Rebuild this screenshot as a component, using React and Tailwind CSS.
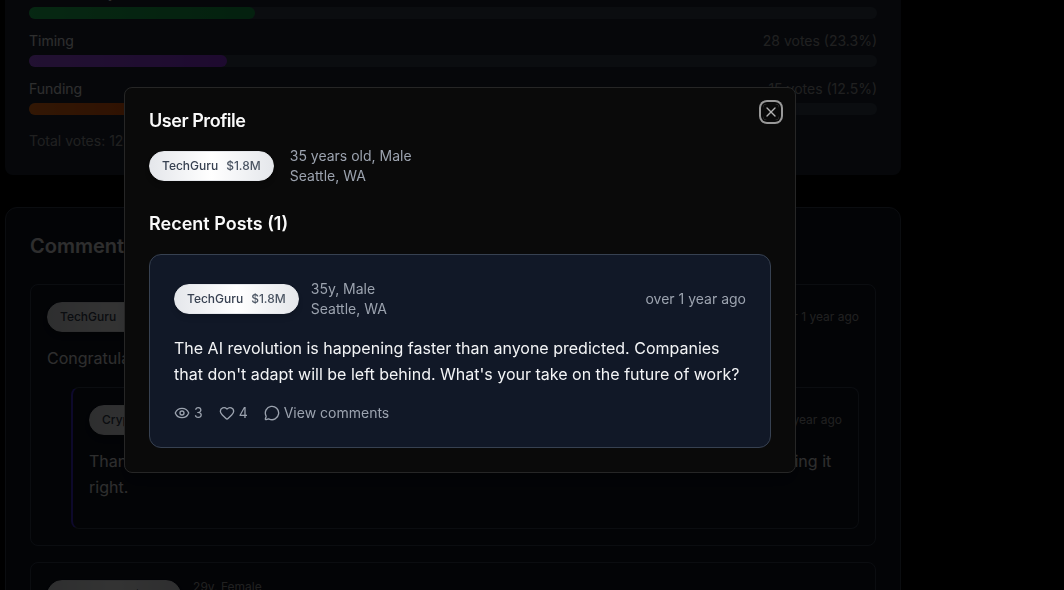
import { Eye, Heart, MessageCircle, X } from "lucide-react";

const results = [
  { label: "Team Quality", votes: 32, share: 26.7, fill: "from-[#22c55e] to-[#16a34a]" },
  { label: "Timing", votes: 28, share: 23.3, fill: "from-[#a855f7] to-[#9333ea]" },
  { label: "Funding", votes: 15, share: 12.5, fill: "from-[#f97316] to-[#ea580c]" },
];

function UserPill({ name, worth }) {
  return (
    <span className="inline-flex shrink-0 items-center gap-2 rounded-full border border-gray-200 bg-linear-to-r from-gray-200 via-white to-gray-200 px-3 py-1.5 text-xs font-medium text-[#374151] shadow-md">
      <span>{name}</span>
      <span className="text-[#4b5563]">{worth}</span>
    </span>
  );
}

function CommentHeader({ name, worth, person, place }) {
  return (
    <div className="flex items-center justify-between text-xs text-neutral-400">
      <div className="flex items-center gap-3">
        <UserPill name={name} worth={worth} />
        <div>
          <div>{person}</div>
          <div>{place}</div>
        </div>
      </div>
      <span>over 1 year ago</span>
    </div>
  );
}

function PollResults() {
  return (
    <section className="rounded-lg bg-[#1e2636] p-6 text-sm">
      <div className="flex flex-col gap-3">
        {results.map((r) => (
          <div key={r.label} className="flex flex-col gap-1">
            <div className="flex justify-between">
              <span className="text-neutral-200">{r.label}</span>
              <span className="text-neutral-400">
                {r.votes} votes ({r.share}%)
              </span>
            </div>
            <div className="h-3 rounded-full bg-[#374151]">
              <div className={`h-3 rounded-full bg-linear-to-r ${r.fill}`} style={{ width: `${r.share}%` }} />
            </div>
          </div>
        ))}
      </div>
      <p className="mt-4 text-neutral-400">Total votes: 120</p>
    </section>
  );
}

function Comments() {
  return (
    <section className="rounded-xl border border-[#374151] bg-[#0f141f] p-6">
      <h2 className="mb-6 text-xl font-semibold text-neutral-200">Comments (2)</h2>
      <div className="flex flex-col gap-4">
        <article className="rounded-lg border border-[#374151] p-4">
          <CommentHeader name="TechGuru" worth="$1.8M" person="35y, Male" place="Seattle, WA" />
          <p className="mt-3 leading-[26px] text-neutral-200">Congratulations on the exit!</p>
          <article className="mt-4 ml-6 rounded-lg border border-l-2 border-[#374151] border-l-indigo-700 p-4 pb-7">
            <CommentHeader name="CryptoKing" worth="$2.5M" person="28y, Male" place="Miami, FL" />
            <p className="mt-3 leading-[26px] text-neutral-200">
              Thank you! It took years of hard work, a great team and a lot of patience, but we ended up doing it right.
            </p>
          </article>
        </article>
        <article className="rounded-lg border border-[#374151] p-4">
          <CommentHeader name="StartupCeo" worth="$1.2M" person="29y, Female" place="Austin, TX" />
          <p className="mt-3 leading-[26px] text-neutral-200">Inspiring story.</p>
        </article>
      </div>
    </section>
  );
}

function ProfileDialog() {
  return (
    <div className="fixed inset-0 flex items-center justify-center bg-black/80 pr-36 pb-[30px]">
      <div
        role="dialog"
        aria-modal="true"
        aria-labelledby="profile-title"
        className="relative w-full max-w-2xl rounded-lg border border-neutral-800 bg-neutral-950 p-6 shadow-lg"
      >
        <h2 id="profile-title" className="text-lg leading-[18px] font-semibold tracking-tight text-neutral-50">
          User Profile
        </h2>
        <button
          type="button"
          aria-label="Close"
          className="absolute top-4 right-4 rounded-sm text-neutral-50 opacity-70 ring-2 ring-neutral-300 ring-offset-2 ring-offset-neutral-950"
        >
          <X className="size-4" />
        </button>

        <div className="mt-4 flex items-center gap-4 text-sm text-[#9ca3af]">
          <UserPill name="TechGuru" worth="$1.8M" />
          <div>
            <div>35 years old, Male</div>
            <div>Seattle, WA</div>
          </div>
        </div>

        <h3 className="mt-6 mb-4 text-lg leading-7 font-semibold text-neutral-50">Recent Posts (1)</h3>

        <article className="rounded-xl border border-[#374151] bg-[#111827] p-6 text-sm text-[#9ca3af]">
          <div className="flex items-center justify-between">
            <div className="flex items-center gap-3">
              <UserPill name="TechGuru" worth="$1.8M" />
              <div>
                <div>35y, Male</div>
                <div>Seattle, WA</div>
              </div>
            </div>
            <span>over 1 year ago</span>
          </div>
          <p className="my-4 text-base leading-[26px] text-gray-100">
            The AI revolution is happening faster than anyone predicted. Companies that don't adapt will be left
            behind. What's your take on the future of work?
          </p>
          <div className="flex items-center gap-4">
            <span className="flex items-center gap-1">
              <Eye className="size-4" />3
            </span>
            <button type="button" className="flex items-center gap-1">
              <Heart className="size-4" />4
            </button>
            <button type="button" className="flex items-center gap-1">
              <MessageCircle className="size-4" />
              View comments
            </button>
          </div>
        </article>
      </div>
    </div>
  );
}

export default function App() {
  return (
    <div className="h-screen overflow-hidden bg-black font-['Inter',sans-serif]">
      <main className="-mt-[41px] mr-[163px] ml-[5px] flex max-w-4xl flex-col gap-8">
        <PollResults />
        <Comments />
      </main>
      <ProfileDialog />
    </div>
  );
}
